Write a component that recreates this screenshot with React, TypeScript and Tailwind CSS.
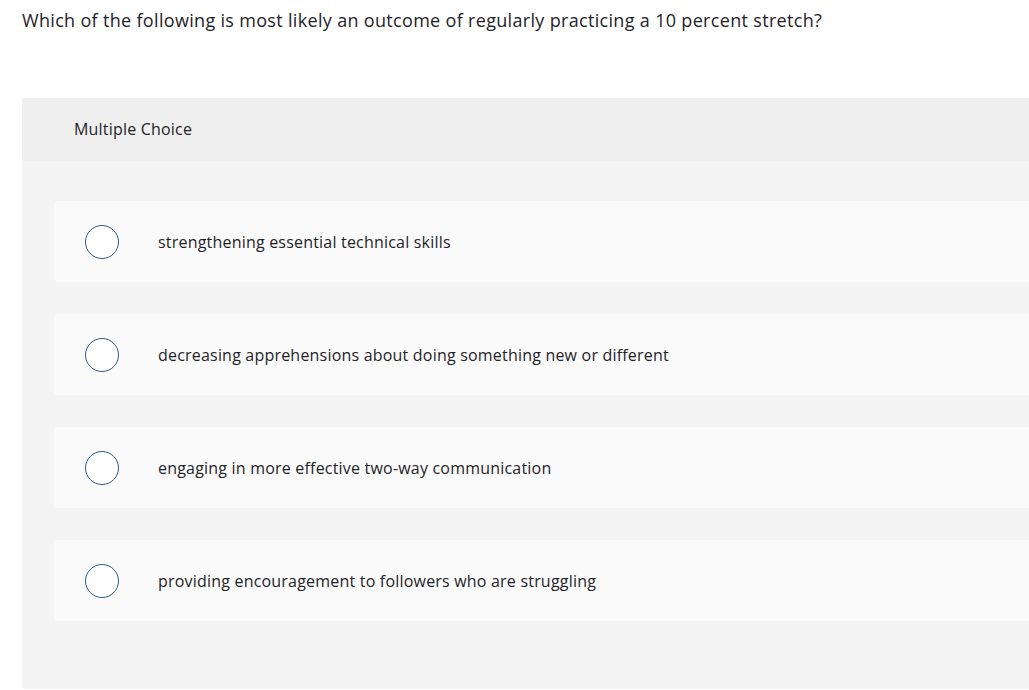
export default function App() {
  const options = [
    "strengthening essential technical skills",
    "decreasing apprehensions about doing something new or different",
    "engaging in more effective two-way communication",
    "providing encouragement to followers who are struggling",
  ];
  return (
    <div className="w-[1029px] h-[690px] overflow-hidden bg-white text-[#1f2328]" style={{ fontFamily: "'Open Sans', sans-serif" }}>
      <div className="pl-[22px] pt-[7px] text-[18px] leading-[26px] tracking-[0.32px]">
        Which of the following is most likely an outcome of regularly practicing a 10 percent stretch?
      </div>
      <div className="ml-[22px] mt-[65px] w-[1040px] rounded-[4px] bg-[#f4f4f4] h-[591px]">
        <div className="h-[63px] rounded-t-[4px] bg-[#efefef] pl-[52px] flex items-center text-[16px] pb-[2px] tracking-[0.2px]">
          Multiple Choice
        </div>
        <div className="pt-[40px] pl-[32px] flex flex-col gap-[32px]">
          {options.map((o) => (
            <div key={o} className="h-[81px] rounded-[4px] bg-[#fafafa] flex items-center">
              <div className="ml-[31px] w-[34px] h-[34px] rounded-full border-[1.5px] border-[#2c5a8c] bg-white shrink-0" />
              <div className="ml-[39px] text-[16px] tracking-[0.2px]">{o}</div>
            </div>
          ))}
        </div>
      </div>
    </div>
  );
}
